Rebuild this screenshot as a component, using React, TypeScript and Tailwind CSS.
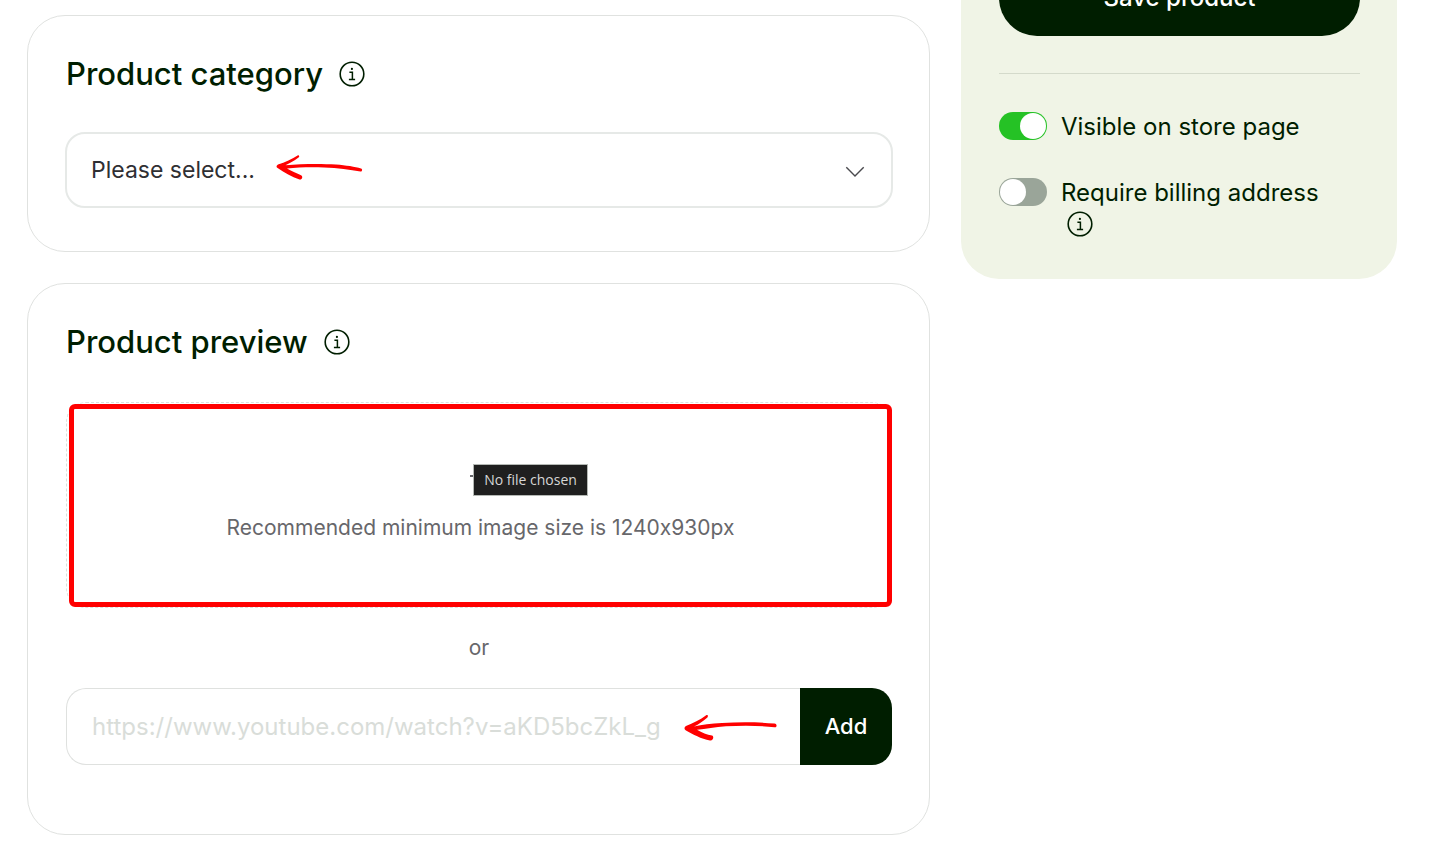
import { useState } from 'react'
import type { ReactNode } from 'react'

function InfoIcon() {
  return (
    <svg viewBox="0 0 26 26" className="h-[26px] w-[26px]" fill="none" stroke="currentColor" aria-hidden>
      <circle cx="13" cy="13" r="11.8" strokeWidth="1.6" />
      <path d="M10.400 11.200h3v6.800M9.900 18.400h6.200" strokeWidth="1.5" />
      <circle cx="12.900" cy="7.900" r="1.100" fill="currentColor" stroke="none" />
    </svg>
  )
}

function InfoButton({ label }: { label: string }) {
  return (
    <button type="button" aria-label={label} className="block shrink-0">
      <InfoIcon />
    </button>
  )
}

function Card({ title, children }: { title: string; children: ReactNode }) {
  return (
    <section className="rounded-[38px] border border-[#e0e2e0] bg-white pr-[37px] pl-[38px]">
      <header className="flex items-center gap-4 pt-9">
        <h2 className="text-[31px] leading-[44px] font-medium">{title}</h2>
        <InfoButton label={`About ${title.toLowerCase()}`} />
      </header>
      {children}
    </section>
  )
}

type ToggleProps = {
  id: string
  label: string
  checked: boolean
  onChange: (value: boolean) => void
  info?: boolean
}

function Toggle({ id, label, checked, onChange, info }: ToggleProps) {
  return (
    <div className="flex items-start gap-[14px]">
      <input
        id={id}
        type="checkbox"
        checked={checked}
        onChange={(e) => onChange(e.target.checked)}
        className="mt-px h-7 w-12 shrink-0 cursor-pointer appearance-none rounded-full bg-[#9aa599] p-px before:block before:h-[26px] before:w-[26px] before:rounded-full before:bg-white checked:bg-[#25c225] checked:before:translate-x-5"
      />
      <div>
        <label htmlFor={id} className="block text-2xl leading-8">
          {label}
        </label>
        {info && (
          <div className="pt-0.5 pl-1.5">
            <InfoButton label={`About ${label.toLowerCase()}`} />
          </div>
        )}
      </div>
    </div>
  )
}

export default function App() {
  const [visible, setVisible] = useState(true)
  const [billing, setBilling] = useState(false)
  const [url, setUrl] = useState('')

  return (
    <div className="flex min-h-screen items-start gap-[31px] overflow-hidden bg-white pr-9 pl-[27px] font-[Inter,sans-serif] text-[#001e00] [font-feature-settings:'calt'_0]">
      <main className="flex min-w-0 flex-1 flex-col gap-[31px] pt-[15px] pb-3.5">
        <Card title="Product category">
          <div className="relative -mx-px mt-9 mb-[43px]">
            <select
              aria-label="Product category"
              defaultValue=""
              className="block h-[76px] w-full appearance-none rounded-[20px] border-2 border-[#e6e9e7] bg-white pr-16 pl-6 text-[23px] text-[#2f2f33]"
            >
              <option value="">Please select...</option>
            </select>
            <svg
              viewBox="0 0 20 12"
              className="pointer-events-none absolute top-[34px] right-7 h-3 w-5"
              fill="none"
              stroke="#4a4a4e"
              strokeWidth="1.4"
              aria-hidden
            >
              <path d="M1.3 1.3 10 10l8.700-8.700" />
            </svg>
            <svg
              viewBox="0 0 87 27"
              className="pointer-events-none absolute top-[22px] left-[211px] h-[27px] w-[87px]"
              fill="#ff0000"
              aria-hidden
            >
              <path d="M22 1.200C23.500 1 23.600 2.800 22.500 3.600 18 7 13 9.500 9.500 11.200 26 9.800 45 9.500 60 10.600 70 11.400 79 12.800 85 14.500 87 15.300 86 17.800 84.500 17.500 74 15.800 62 14 48 13.500 34 13 22 13.400 11 14.600 16 17.500 21 19.600 25 21.200 27.500 22.600 26 26 23.500 25.400 15.500 23.200 8.500 18.500 2 14.300 0 13.200 0 11.600 2 10.500 9 8.200 16 5 22 1.200Z" />
            </svg>
          </div>
        </Card>

        <Card title="Product preview">
          <div className="relative mt-[38px] h-[206px] rounded-[20px] border border-dashed border-[#dcdfdc]">
            <label
              htmlFor="preview-file"
              className="absolute -right-px top-px bottom-0 left-0.5 flex cursor-pointer flex-col items-center rounded-md border-[5px] border-[#ff0000] pt-[55px] text-[21px] leading-8 text-[#67676b]"
            >
              <span className="relative mb-[17px] flex h-[31px] w-[21px]">
                <span className="mt-[11px] h-0.5 w-1 bg-[#67676b]" />
                <span className="absolute top-0 left-[3px] flex h-[32px] w-[115px] items-center justify-center border border-[#b5b9b5] bg-[#1f1f1f] font-['Open_Sans',sans-serif] text-sm text-[#d6d6d6]">
                  No file chosen
                </span>
              </span>
              <span>Recommended minimum image size is 1240x930px</span>
            </label>
            <input id="preview-file" type="file" className="sr-only" />
          </div>

          <p className="my-6 text-center text-[21px] leading-8 text-[#67676b]">or</p>

          <form className="relative mb-[69px] flex h-[77px]" onSubmit={(e) => e.preventDefault()}>
            <input
              type="url"
              aria-label="Video URL"
              value={url}
              onChange={(e) => setUrl(e.target.value)}
              placeholder="https://www.youtube.com/watch?v=aKD5bcZkL_g"
              className="min-w-0 flex-1 rounded-l-[20px] border border-r-0 border-[#dfe1df] pl-[25px] text-2xl placeholder:text-[#d9ddd9] focus:outline-none"
            />
            <button type="submit" className="w-[92px] rounded-r-[20px] bg-[#001e00] text-[22px] font-medium text-white">
              Add
            </button>
            <svg
              viewBox="0 0 94 28"
              className="pointer-events-none absolute top-[26px] left-[618px] h-7 w-[94px]"
              fill="#ff0000"
              aria-hidden
            >
              <path d="M22.500 1C24 .5 24.300 2.500 23.400 3.400 19 7.500 14 10.500 10 12.600 18 10.500 27 9.400 38 8.900 56 8 74 8 90.500 9.600 93.500 10.200 93 13.600 90.500 13.300 76 11.400 58 11.300 42 12.300 31 13 22 15.200 13 15.700 18 18.600 23 20.800 28 21.400 30.500 22.500 29 27 26 26.400 17 24.800 9 20.200 2 16.400 0 15.400 0 13.200 2 12 9 9.400 16 5.800 22.500 1Z" />
            </svg>
          </form>
        </Card>
      </main>

      <aside className="-mt-20 w-[436px] shrink-0 rounded-[38px] bg-[#f0f4e6] pt-10 pr-[37px] pb-[42px] pl-[38px]">
        <button type="button" className="h-[76px] w-full rounded-[38px] bg-[#001e00] text-2xl font-medium text-white">
          Save product
        </button>
        <hr className="my-[37px] border-[#d4dacb]" />
        <div className="flex flex-col gap-[34px]">
          <Toggle id="visible" label="Visible on store page" checked={visible} onChange={setVisible} />
          <Toggle id="billing" label="Require billing address" checked={billing} onChange={setBilling} info />
        </div>
      </aside>
    </div>
  )
}
